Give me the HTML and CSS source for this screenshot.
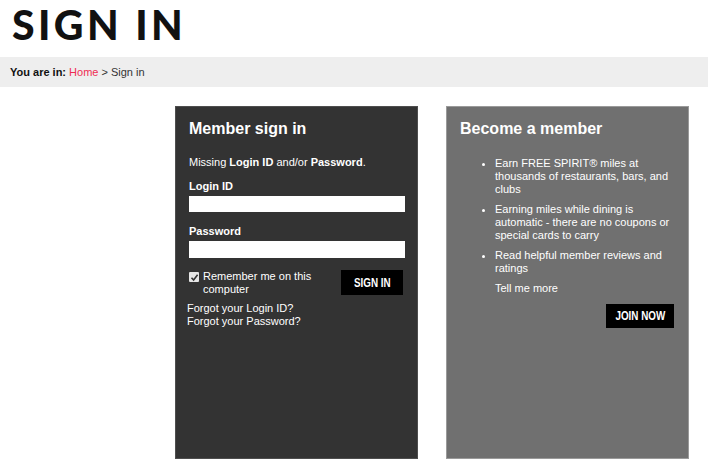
FILE: index.html
```html
<!DOCTYPE html>
<html>
<head>
<meta charset="utf-8">
<link rel="stylesheet" href="styles.css">
</head>
<body>
<header class="page-head">
  <h1 class="title">SIGN IN</h1>
</header>
<div class="crumbs"><b>You are in:</b> <a class="crumb-link" href="#">Home</a> &gt; Sign in</div>
<main class="panels">
  <section class="panel panel-dark">
    <h2 class="panel-title">Member sign in</h2>
    <p class="msg">Missing <b>Login ID</b> and/or <b>Password</b>.</p>
    <label class="field-label">Login ID</label>
    <div class="input"></div>
    <label class="field-label field-label-2">Password</label>
    <div class="input input-2"></div>
    <div class="signin-row">
      <div class="remember">
        <span class="check"><svg width="9" height="9" viewBox="0 0 9 9"><path d="M1.5 4.8 L3.6 7 L7.6 1.8" fill="none" stroke="#333" stroke-width="1.6"/></svg></span>
        <span class="remember-text">Remember me on this computer</span>
      </div>
      <button class="btn btn-signin"><span class="btn-text">SIGN IN</span></button>
    </div>
    <div class="forgot">
      <a href="#">Forgot your Login ID?</a>
      <a href="#">Forgot your Password?</a>
    </div>
  </section>
  <section class="panel panel-grey">
    <h2 class="panel-title">Become a member</h2>
    <ul class="benefits">
      <li>Earn FREE SPIRIT® miles at thousands of restaurants, bars, and clubs</li>
      <li>Earning miles while dining is automatic - there are no coupons or special cards to carry</li>
      <li>Read helpful member reviews and ratings</li>
    </ul>
    <a class="more" href="#">Tell me more</a>
    <div class="join-row"><button class="btn btn-join"><span class="btn-text">JOIN NOW</span></button></div>
  </section>
</main>
</body>
</html>
```
FILE: styles.css
```css
html, body { margin: 0; padding: 0; background: #fff; }
body { font-family: "Liberation Sans", Arial, sans-serif; font-size: 11px; color: #222; }
.page-head { height: 57px; }
.title {
  margin: 0;
  padding: 2px 0 0 12px;
  font-family: Lato, "DejaVu Sans", sans-serif;
  font-weight: 900;
  font-size: 41px;
  line-height: 46px;
  letter-spacing: 3.4px;
  color: #111;
}
.crumbs {
  height: 30px;
  line-height: 30px;
  background: #eeeeee;
  padding-left: 10px;
  color: #333;
}
.crumbs b { color: #111; }
.crumb-link { color: #ee2c52; text-decoration: none; }
.panels {
  display: flex;
  gap: 28px;
  padding: 19px 0 0 175px;
}
.panel {
  width: 243px;
  height: 353px;
  box-sizing: border-box;
  color: #fff;
  padding: 11px 13px 0 13px;
}
.panel-dark { background: #333333; border: 1px solid #4e4e4e; }
.panel-grey { background: #707070; border: 1px solid #9a9a9a; }
.panel-title {
  margin: 0;
  font-size: 16px;
  line-height: 22px;
  font-weight: bold;
}
.msg { margin: 16px 0 0; line-height: 13px; }
.field-label { display: block; font-weight: bold; margin-top: 11px; line-height: 13px; }
.field-label-2 { margin-top: 13px; }
.input { height: 16px; background: #fff; margin-top: 3px; width: 216px; }
.input-2 { height: 17px; }
.signin-row { display: flex; justify-content: space-between; align-items: flex-start; margin-top: 12px; }
.remember { display: flex; align-items: flex-start; }
.check {
  width: 10px; height: 10px; background: #e6e6e6; border-radius: 1px;
  display: flex; align-items: center; justify-content: center;
  margin: 2px 4px 0 0;
}
.remember-text { width: 120px; line-height: 13px; }
.btn {
  background: #000;
  color: #fff;
  border: 0;
  padding: 0;
  font-family: "Liberation Sans", Arial, sans-serif;
  font-weight: bold;
  font-size: 12px;
  display: flex;
  align-items: center;
  justify-content: center;
}
.btn-text { display: inline-block; transform: scaleX(0.82); }
.btn-signin { width: 62px; height: 25px; margin-right: 1px; }
.btn-join { width: 68px; height: 24px; }
.forgot { margin: 6px 0 0 -2px; display: flex; flex-direction: column; line-height: 13px; }
.forgot a { color: #fff; text-decoration: none; }
.benefits { margin: 17px 0 0; padding: 0 0 0 35px; }
.benefits li { line-height: 13px; margin-bottom: 7px; }
.more { display: block; margin: 0 0 0 35px; color: #fff; text-decoration: none; line-height: 13px; }
.join-row { display: flex; justify-content: flex-end; margin: 9px 1px 0 0; }
```
